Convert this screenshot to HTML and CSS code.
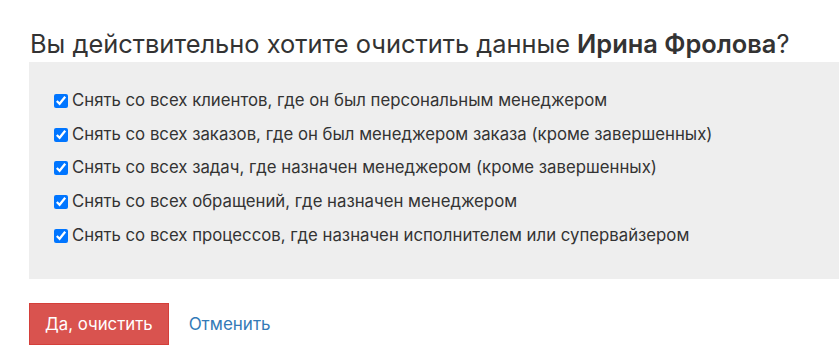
FILE: index.html
```html
<!DOCTYPE html>
<html lang="ru">
<head>
    <meta charset="UTF-8">
    <meta name="viewport" content="width=device-width, initial-scale=1.0">
    <title>Очистка данных сотрудника</title>
    <link rel="stylesheet" href="styles.css">
</head>
<body>

    <div class="page">
        <h2 class="title">Вы действительно хотите очистить данные <b>Ирина Фролова</b>?</h2>

        <div class="options">
            <label class="option"><input type="checkbox" checked> Снять со всех клиентов, где он был персональным менеджером</label>
            <label class="option"><input type="checkbox" checked> Снять со всех заказов, где он был менеджером заказа (кроме завершенных)</label>
            <label class="option"><input type="checkbox" checked> Снять со всех задач, где назначен менеджером (кроме завершенных)</label>
            <label class="option"><input type="checkbox" checked> Снять со всех обращений, где назначен менеджером</label>
            <label class="option"><input type="checkbox" checked> Снять со всех процессов, где назначен исполнителем или супервайзером</label>
        </div>

        <div class="actions">
            <button class="btn-danger" type="button">Да, очистить</button>
            <a class="cancel" href="#">Отменить</a>
        </div>
    </div>

</body>
</html>
```

FILE: styles.css
```css
body {
    margin: 0;
    font-family: Inter, 'Noto Sans', sans-serif;
    color: rgb(51, 51, 51);
    background: rgb(255, 255, 255);
}

.page {
    padding: 28px 0 0 29px;
}

.title {
    margin: 0 0 0 1px;
    font-size: 25.4px;
    font-weight: normal;
    line-height: 32px;
}

.title b {
    font-weight: 600;
}

.options {
    margin-top: 2px;
    background: rgb(238, 238, 238);
    padding: 22px 0 26px 25px;
}

.option {
    display: flex;
    align-items: center;
    font-size: 16.75px;
    line-height: 33.7px;
    cursor: pointer;
}

.option input {
    margin: 0 4px 0 0;
    width: 14px;
    height: 14px;
}

.actions {
    display: flex;
    align-items: center;
    gap: 20px;
    margin-top: 24px;
}

.btn-danger {
    font-family: inherit;
    font-size: 16.8px;
    color: rgb(255, 255, 255);
    background: rgb(217, 83, 79);
    border: 1px solid rgb(212, 63, 58);
    padding: 0 15px;
    height: 42px;
    cursor: pointer;
}

.cancel {
    font-size: 17px;
    color: rgb(51, 122, 183);
    text-decoration: none;
}
```
